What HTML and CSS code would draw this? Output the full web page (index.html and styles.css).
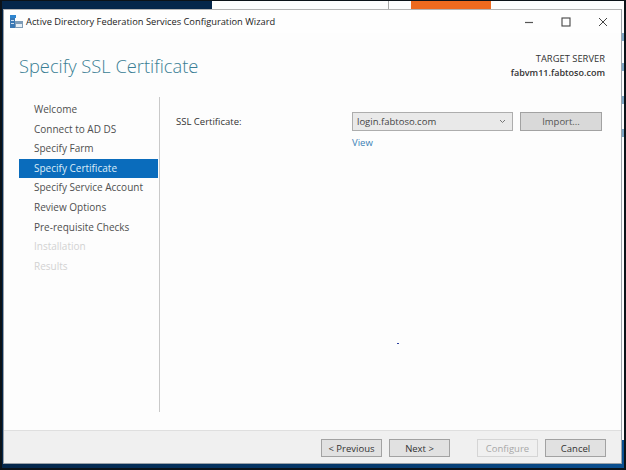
FILE: index.html
```html
<!DOCTYPE html>
<html lang="en">
<head>
<meta charset="utf-8">
<title>Active Directory Federation Services Configuration Wizard</title>
<link rel="stylesheet" href="styles.css">
</head>
<body>
<div class="desktop">
  <div class="strip">
    <div class="strip-dark"></div>
    <div class="strip-white"></div>
    <div class="strip-line"></div>
    <div class="strip-gap"></div>
    <div class="strip-orange"></div>
    <div class="strip-end"></div>
  </div>
  <div class="right-edge">
    <span class="frag f1"></span>
    <span class="frag f2"></span>
    <span class="frag f3"></span>
    <span class="frag f4"></span>
  </div>
  <div class="window">
    <div class="titlebar">
      <svg class="app-icon" width="13" height="13" viewBox="0 0 13 13">
        <rect x="0" y="0" width="6" height="3" fill="#2f86d0"/>
        <rect x="0" y="3" width="5" height="10" fill="#3a78b4"/>
        <rect x="1" y="5" width="3" height="1" fill="#cfe0f0"/>
        <rect x="1" y="8" width="3" height="1" fill="#cfe0f0"/>
        <rect x="5" y="6" width="8" height="7" fill="#7f9db8"/>
        <rect x="6" y="9" width="6" height="3" fill="#e6eef5"/>
      </svg>
      <span class="title">Active Directory Federation Services Configuration Wizard</span>
      <div class="controls">
        <svg class="ctl" width="10" height="10" viewBox="0 0 10 10"><path d="M1 5.5h8" stroke="#555" stroke-width="1.2"/></svg>
        <svg class="ctl" width="10" height="10" viewBox="0 0 10 10"><rect x="1" y="1" width="8" height="8" fill="none" stroke="#444" stroke-width="1.1"/></svg>
        <svg class="ctl" width="10" height="10" viewBox="0 0 10 10"><path d="M1 1l8 8M9 1l-8 8" stroke="#444" stroke-width="1"/></svg>
      </div>
    </div>
    <div class="header">
      <h1 class="heading">Specify SSL Certificate</h1>
      <div class="server">
        <div class="server-role">TARGET SERVER</div>
        <div class="server-name">fabvm11.fabtoso.com</div>
      </div>
    </div>
    <div class="main">
      <ul class="nav">
        <li class="nav-item">Welcome</li>
        <li class="nav-item">Connect to AD DS</li>
        <li class="nav-item">Specify Farm</li>
        <li class="nav-item active">Specify Certificate</li>
        <li class="nav-item">Specify Service Account</li>
        <li class="nav-item">Review Options</li>
        <li class="nav-item">Pre-requisite Checks</li>
        <li class="nav-item disabled">Installation</li>
        <li class="nav-item disabled">Results</li>
      </ul>
      <div class="content">
        <div class="cert-row">
          <span class="cert-label">SSL Certificate:</span>
          <div class="select">
            <span>login.fabtoso.com</span>
            <svg width="7" height="5" viewBox="0 0 7 5"><path d="M1 1l2.5 2.5L6 1" fill="none" stroke="#777" stroke-width="1"/></svg>
          </div>
          <div class="btn import">Import...</div>
        </div>
        <a class="view">View</a>
        <div class="dot"></div>
      </div>
    </div>
    <div class="footer">
      <div class="btn">&lt; Previous</div>
      <div class="btn next">Next &gt;</div>
      <div class="btn off">Configure</div>
      <div class="btn">Cancel</div>
    </div>
  </div>
  <div class="frame"></div>
</div>
</body>
</html>
```
FILE: styles.css
```css
* { box-sizing: border-box; }
html, body { margin: 0; padding: 0; }
body { width: 626px; height: 470px; overflow: hidden; font-family: "Open Sans", "Noto Sans", sans-serif; }
.desktop { position: relative; width: 626px; height: 470px; background: linear-gradient(90deg, #04264a 0%, #053a6e 60%, #0a4f90 100%); overflow: hidden; }
.strip { display: flex; height: 9px; }
.strip-dark { width: 212px; background: #04264a; }
.strip-white { width: 176px; background: #fdfdfd; }
.strip-line { width: 1px; background: #a8a8a8; }
.strip-gap { width: 22px; background: #fdfdfd; }
.strip-orange { width: 80px; background: #ee6a1f; }
.strip-end { flex: 1; background: #fdfdfd; }
.right-edge { position: absolute; left: 622px; top: 9px; width: 4px; height: 431px; background: #fbfcfd; }
.frag { position: absolute; left: 0; width: 2px; height: 8px; background: #7fa6c4; }
.f1 { top: 24px; }
.f2 { top: 54px; }
.f3 { top: 87px; }
.f4 { top: 120px; }
.frame { position: absolute; inset: 0; border-style: solid; border-color: #0b1218; border-width: 1px 2px 2px 2px; pointer-events: none; }
.window { position: absolute; left: 3px; top: 9px; width: 619px; height: 455px; background: #fdfdfd; border: 1px solid #9aa1a8; border-top-color: #b4b4b4; display: flex; flex-direction: column; }
.titlebar { height: 23px; display: flex; align-items: center; padding: 0 13px 0 6px; background: #fefefe; }
.app-icon { margin-right: 3px; flex: none; }
.title { font-size: 9.3px; color: #222; white-space: nowrap; }
.controls { margin-left: auto; display: flex; gap: 27px; }
.ctl { display: block; }
.header { height: 64px; display: flex; justify-content: space-between; padding: 20px 16px 0 15px; }
.heading { margin: 0; font-size: 18.3px; font-weight: 300; line-height: 26px; color: #3a7d94; }
.server { font-size: 9px; line-height: 14px; text-align: right; color: #333; margin-top: -1px; }
.server-role { font-size: 9.4px; }
.server-name { font-weight: 600; }
.main { flex: 1; display: flex; min-height: 0; }
.nav { list-style: none; margin: 0 1px 0 15px; padding: 3px 0 0; width: 139px; }
.nav-item { height: 19.6px; line-height: 19.6px; padding-left: 15px; font-size: 10px; color: #4f4f4f; white-space: nowrap; }
.nav-item.active { background: #0a6cbc; color: #dcecf8; }
.nav-item.disabled { color: #d2d2d2; }
.content { position: relative; flex: 1; margin-bottom: 18px; border-left: 1px solid #c9c9c9; padding: 0 18px 0 16px; }
.cert-row { display: flex; align-items: center; height: 19px; margin-top: 15px; }
.cert-label { width: 176px; font-size: 9.5px; color: #333; }
.select { width: 161px; height: 19px; display: flex; align-items: center; justify-content: space-between; padding: 0 6px 0 4px; font-size: 9.5px; color: #444; background: #e9e9e9; border: 1px solid #adadad; }
.view { display: block; margin: 5px 0 0 176px; font-size: 9.5px; line-height: 13px; color: #3b7fb5; }
.dot { position: absolute; left: 237px; top: 246px; width: 2px; height: 1px; background: #2a3fa0; }
.btn { width: 61px; height: 18px; display: flex; align-items: center; justify-content: center; font-size: 9.5px; color: #333; background: #e1e1e1; border: 1px solid #a2a2a2; }
.import { width: 82px; height: 19px; margin-left: 7px; color: #555; background: #d9d9d9; }
.footer { height: 33px; margin-top: auto; display: flex; align-items: center; justify-content: flex-end; gap: 7px; padding: 2px 15px 0 0; background: #f0f0f0; border-top: 1px solid #dfdfdf; }
.next { margin-right: 20px; }
.off { color: #a8a8a8; background: #f0f0f0; border-color: #d5d5d5; }
```
